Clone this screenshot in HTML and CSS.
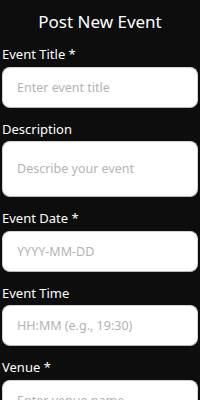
FILE: index.html
```html
<!DOCTYPE html>
<html>
<head>
<meta charset="utf-8">
<link rel="stylesheet" href="styles.css">
</head>
<body>
<main class="screen">
  <h1 class="title">Post New Event</h1>
  <form class="form">
    <label class="field">
      <span class="label">Event Title *</span>
      <input class="input" type="text" placeholder="Enter event title">
    </label>
    <label class="field">
      <span class="label">Description</span>
      <textarea class="input textarea" placeholder="Describe your event"></textarea>
    </label>
    <label class="field">
      <span class="label">Event Date *</span>
      <input class="input" type="text" placeholder="YYYY-MM-DD">
    </label>
    <label class="field">
      <span class="label">Event Time</span>
      <input class="input" type="text" placeholder="HH:MM (e.g., 19:30)">
    </label>
    <label class="field">
      <span class="label">Venue *</span>
      <input class="input" type="text" placeholder="Enter venue name">
    </label>
  </form>
</main>
</body>
</html>
```
FILE: styles.css
```css
html, body {
  margin: 0;
  padding: 0;
  background: #0d0d0d;
  height: 100%;
  overflow: hidden;
}
.screen {
  padding: 10px 2px 0 2px;
  font-family: "Noto Sans", "Open Sans", sans-serif;
  color: #ffffff;
}
.title {
  margin: 0 0 11px 0;
  font-size: 17px;
  font-weight: 400;
  line-height: 24px;
  text-align: center;
}
.form {
  display: flex;
  flex-direction: column;
  gap: 12px;
}
.field {
  display: flex;
  flex-direction: column;
  gap: 3.5px;
}
.label {
  font-size: 13px;
  line-height: 18px;
  color: #ffffff;
}
.input {
  box-sizing: border-box;
  height: 41px;
  width: 100%;
  margin: 0;
  padding: 0 14px;
  border: 1px solid #d4d4d4;
  border-bottom-color: #b8b8b8;
  border-radius: 8px;
  background: #ffffff;
  font-family: "Noto Sans", "Open Sans", sans-serif;
  font-size: 12.5px;
  color: #222222;
  outline: none;
}
.input::placeholder {
  color: #b3b3b3;
}
.textarea {
  height: 56px;
  padding-top: 18px;
  resize: none;
  line-height: 18px;
  overflow: hidden;
}
```
